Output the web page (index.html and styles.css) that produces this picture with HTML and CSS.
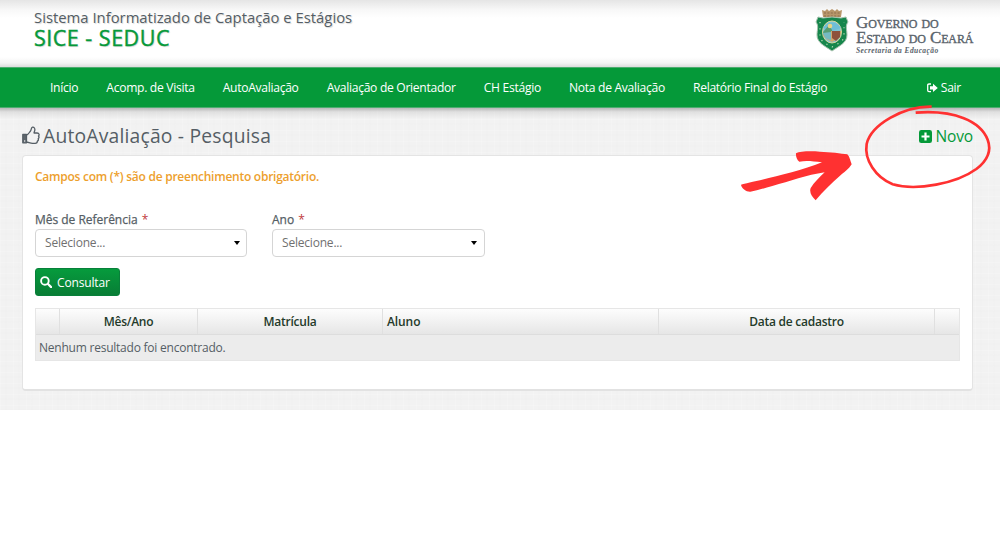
FILE: index.html
```html
<!DOCTYPE html>
<html lang="pt-BR">
<head>
<meta charset="utf-8">
<title>SICE - SEDUC</title>
<link rel="stylesheet" href="styles.css">
</head>
<body>
<div class="page">
  <header class="header">
    <div class="brand">
      <div class="brand-sub">Sistema Informatizado de Captação e Estágios</div>
      <div class="brand-name">SICE - SEDUC</div>
    </div>
    <div class="gov">
      <svg class="crest" viewBox="0 0 34 46" width="34" height="46">
        <path d="M7 2l3 1 2-2 2 2 3-2 3 2 2-2 2 2 3-1-1 7H8z" fill="#b8966a"/>
        <path d="M9 5h16M9 8h16" stroke="#8b6c4c" stroke-width="1" stroke-dasharray="2 1.4"/>
        <path d="M3 9l5 1 9-1 9 1 5-1 2 5c-3 4-1 8-1 13 0 8-8 11-15 16C10 38 2 35 2 27c0-5 2-9-1-13z" fill="#16864c" stroke="#a7c2ae" stroke-width="1"/>
        <path d="M5 14v15c1 5 7 7 12 10 5-3 11-5 12-10V14" fill="none" stroke="#c3e4bf" stroke-width="1.2" stroke-dasharray="1.2 5"/>
        <ellipse cx="17" cy="24" rx="9.5" ry="11" fill="#7ec5d5" stroke="#dad69c"/>
        <path d="M8 20c4-7 14-7 18 0l-9 3z" fill="#6ebed7"/>
        <path d="M8 24l6-7 3 5v6H9z" fill="#579c72"/>
        <path d="M16 23h10c1 6-4 9-9 11-4-2-8-4-9-8l7 1z" fill="#cfaa72"/>
        <path d="M17 23h8v6l-4 4-4-3z" fill="#8e523c"/>
        <path d="M8 25l8-1v8c-4 0-7-3-8-7z" fill="#75bac2"/>
        <circle cx="15" cy="18" r="2.3" fill="#ead586"/>
      </svg>
      <div class="gov-text">
        <div class="gov-line">Governo do</div>
        <div class="gov-line">Estado do Ceará</div>
        <div class="gov-dept">Secretaria da Educação</div>
      </div>
    </div>
  </header>
  <nav class="nav">
    <a>Início</a><a>Acomp. de Visita</a><a>AutoAvaliação</a><a>Avaliação de Orientador</a><a>CH Estágio</a><a>Nota de Avaliação</a><a>Relatório Final do Estágio</a>
    <a class="exit"><svg width="11" height="10" viewBox="0 0 11 10"><path d="M4 1H2Q.7 1 .7 2.3v5Q.7 8.700 2 8.700h2" fill="none" stroke="#fff" stroke-width="1.3"/><path d="M3 3.200h3V.8L10.800 4.900 6 9V6.600H3z" fill="#fff"/></svg>Sair</a>
  </nav>
  <main class="main">
    <div class="title-row">
      <h1><svg width="18" height="19" viewBox="0 0 18 19"><path d="M.8 8.500h3.700v8.300H.8z" fill="#5f676d"/><path d="M4.500 9c2-.4 3-3 4-4 1-1 .5-3.700 2-3.900 1.700-.2 2.600 1.500 2.300 3.200L12 7h3.200c2 0 2.400 2 1.300 3 .8 1 .5 2-.3 2.700.4 1 0 2-.8 2.400 0 1.500-1 2.200-2.200 2.200h-2.700c-2.500 0-4-1.200-6-1.300M.8 8.500h3.700v8.300H.8z" fill="none" stroke="#555e65" stroke-width="1.300" stroke-linejoin="round"/><circle cx="2.700" cy="15" r=".7" fill="#fff"/></svg><span>AutoAvaliação - Pesquisa</span></h1>
      <a class="new"><svg width="13" height="13" viewBox="0 0 13 13"><rect width="13" height="13" rx="2.300" fill="#059939"/><path d="M6.500 2.500v8M2.500 6.500h8" stroke="#fff" stroke-width="2.200"/></svg><span>Novo</span></a>
    </div>
    <section class="panel">
      <p class="note">Campos com (*) são de preenchimento obrigatório.</p>
      <div class="fields">
        <div class="field"><label>Mês de Referência <b>*</b></label><div class="select"><span>Selecione...</span><i></i></div></div>
        <div class="field"><label>Ano <b>*</b></label><div class="select"><span>Selecione...</span><i></i></div></div>
      </div>
      <button class="search"><svg width="12" height="12" viewBox="0 0 12 12"><circle cx="4.900" cy="4.900" r="3.800" fill="none" stroke="#fff" stroke-width="1.900"/><path d="M7.800 7.800l3.300 3.300" stroke="#fff" stroke-width="2.200" stroke-linecap="round"/></svg><span>Consultar</span></button>
      <div class="table">
        <div class="thead"><div></div><div>Mês/Ano</div><div>Matrícula</div><div class="left">Aluno</div><div>Data de cadastro</div><div></div></div>
        <div class="empty">Nenhum resultado foi encontrado.</div>
      </div>
    </section>
  </main>
  <svg class="marks" width="270" height="110" viewBox="0 0 810 330">
    <path d="M33 254C60 246 190 222 276 187C248 184 230 181 208 185C200 180 197 168 198 160C210 154 238 153 270 155C300 156 334 160 352 163C360 171 361 184 365 193C358 206 340 219 330 227C306 249 280 272 257 301C246 291 237 277 242 264C252 247 270 231 284 217C230 225 180 244 127 258C100 265 80 273 61 275C50 276 34 265 33 254Z" fill="#ff3131"/>
    <path d="M605 20C520 18 423 75 410 132C402 180 437 232 488 253C560 274 680 250 739 207C773 181 785 151 773 119C752 64 675 29 557 38" fill="none" stroke="#ff3131" stroke-width="8"/>
  </svg>
</div>
</body>
</html>
```
FILE: styles.css
```css
* { box-sizing: border-box; }
body { margin: 0; background: #fff; font-family: "Open Sans", sans-serif; color: #555e65; }
.page { position: relative; width: 1000px; height: 410px; overflow: hidden; display: flex; flex-direction: column; }
.header { height: 67px; flex: none; display: flex; justify-content: space-between; padding: 8px 27px 0 34px; background: linear-gradient(#e5e5e5 0, #f8f8f8 10px, #fff 18px, #fff 57px, #f4f4f4 63px, #dcdcdc 67px); }
.brand { text-shadow: 1px 1px 1px #d8d8d8; white-space: nowrap; }
.brand-sub { font-size: 14.8px; line-height: 18px; letter-spacing: .02px; }
.brand-name { font-size: 21.5px; line-height: 23px; letter-spacing: .5px; color: #059939; -webkit-text-stroke: .4px #059939; }
.gov { display: flex; width: 158px; gap: 7px; }
.crest { flex: none; }
.gov-text { white-space: nowrap; padding-top: 7px; font-family: "Liberation Serif", serif; color: #59636b; }
.gov-line { font-variant: small-caps; font-size: 17px; line-height: 15px; letter-spacing: -.13px; -webkit-text-stroke: .35px #59636b; }
.gov-dept { font-size: 7.5px; line-height: 12px; font-style: italic; font-weight: bold; letter-spacing: .4px; }
.nav { height: 41px; flex: none; display: flex; gap: 28.1px; align-items: center; padding: 0 39px 0 50px; background: #059939; border-top: 1px solid #4dac70; border-bottom: 1px solid #4dac70; color: #fff; font-size: 12.1px; letter-spacing: -.295px; white-space: nowrap; }
.exit { margin-left: auto; display: flex; align-items: center; gap: 3px; }
.main { flex: 1; padding: 15px 27px 19px 22px; background:
  linear-gradient(rgba(0,0,0,.25), rgba(0,0,0,.07) 4px, transparent 11px),
  repeating-linear-gradient(90deg, rgba(255,255,255,.16) 0 1px, transparent 1px 5px, rgba(0,0,0,.004) 5px 7px, transparent 7px 13px),
  repeating-linear-gradient(rgba(255,255,255,.16) 0 1px, transparent 1px 4px, rgba(0,0,0,.004) 4px 6px, transparent 6px 11px), #f2f2f2; }
.title-row { height: 32px; display: flex; justify-content: space-between; align-items: flex-start; }
h1 { display: flex; gap: 3px; margin: 0; font-size: 19.3px; letter-spacing: .2px; font-weight: 400; line-height: 26px; white-space: nowrap; }
h1 svg { margin-top: 3px; }
.new { display: flex; align-items: center; gap: 4px; color: #059939; font-size: 15.5px; letter-spacing: -.15px; line-height: 26px; }
.panel { height: 236px; padding: 14px 12px; border: 1px solid #e4e4e4; border-bottom: 2px solid #e2e2e2; border-radius: 4px; background: #fff; }
.note { margin: 0; color: #eda02d; font-size: 12px; line-height: 14px; font-weight: 600; letter-spacing: -.25px; white-space: nowrap; }
.fields { display: flex; gap: 25px; margin-top: 28px; }
.field { width: 212px; }
.field + .field { width: 213px; }
label { display: block; height: 16px; font-size: 12px; line-height: 16px; letter-spacing: -.02px; -webkit-text-stroke: .25px currentColor; }
label b { color: #c0393d; margin-left: 1px; font-weight: 400; -webkit-text-stroke: 0; }
.select { height: 28px; margin-top: 1px; padding: 0 6px 2px 9px; display: flex; align-items: center; justify-content: space-between; border: 1px solid #d5d5d5; border-radius: 4px; color: #707070; font-size: 12px; letter-spacing: -.2px; }
.field + .field .select { padding-right: 7px; }
.select i { position: relative; top: 1px; border: 3.5px solid transparent; border-top: 4.5px solid #000; border-bottom: 0; }
.search { display: flex; align-items: center; gap: 5px; width: 85px; height: 28px; margin: 11px 0 0; padding: 0 4px; border: 1px solid #08803a; border-radius: 3px; background: linear-gradient(#069b3d, #087d35); color: #fff; font: 12px "Open Sans", sans-serif; letter-spacing: -.15px; }
.table { margin-top: 12px; border: 1px solid #e6e6e6; height: 53px; }
.thead { display: grid; grid-template-columns: 23px 138px 185px 276px 276px 1fr; height: 26px; background: linear-gradient(#fdfdfd, #e6e6e6); border-bottom: 1px solid #ddd; color: #243a2a; font-size: 12px; font-weight: 600; letter-spacing: -.25px; line-height: 25px; text-align: center; }
.thead div + div { border-left: 1px solid #e0e0e0; }
.thead .left { text-align: left; padding-left: 4px; letter-spacing: -.1px; }
.empty { height: 25px; padding-left: 3px; background: #ececec; font-size: 12px; letter-spacing: -.23px; line-height: 25px; }
.marks { position: absolute; left: 730px; top: 100px; }
```
